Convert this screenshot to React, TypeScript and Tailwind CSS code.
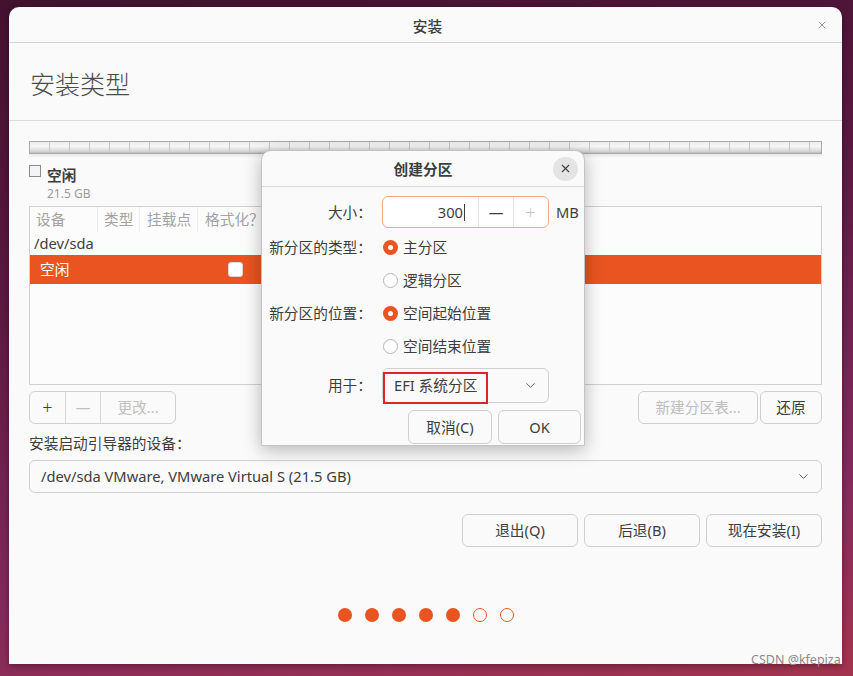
import { ChevronDown, X } from 'lucide-react'

// Ubuntu 安装程序「安装类型」页面 + 「创建分区」对话框

const Btn = ({ label, className = '', disabled = false }: { label: string; className?: string; disabled?: boolean }) => (
  <button
    className={`flex items-center justify-center rounded-[6px] border border-[#cfcfcf] bg-[#fafafa] text-[14.7px] ${
      disabled ? 'text-[#bdbdbd]' : 'text-[#3d3d3d]'
    } ${className}`}
  >
    {label}
  </button>
)

const Radio = ({ checked, label }: { checked: boolean; label: string }) => (
  <div className="flex h-[33px] items-center">
    {checked ? (
      <span className="flex h-[15px] w-[15px] items-center justify-center rounded-full bg-[#e95420]">
        <span className="h-[5px] w-[5px] rounded-full bg-white" />
      </span>
    ) : (
      <span className="h-[15px] w-[15px] rounded-full border border-[#b4b4b4] bg-white" />
    )}
    <span className="ml-[5px]">{label}</span>
  </div>
)

const CreatePartitionDialog = () => (
  <div className="absolute left-[252px] top-[143px] flex h-[296px] w-[324px] flex-col rounded-t-[10px] border border-[#c4c4c4] bg-[#fafafa] shadow-[0_4px_18px_rgba(0,0,0,0.28)]">
    <div className="flex h-[36px] shrink-0 items-center border-b border-[#d8d8d8]">
      <div className="w-[31px]" />
      <div className="flex-1 pt-[2px] text-center text-[14.7px] font-bold text-[#3d3d3d]">创建分区</div>
      <button className="mr-[6px] flex h-[24px] w-[25px] items-center justify-center rounded-full bg-[#e4e4e4]">
        <X size={13} strokeWidth={2} className="text-[#3d3d3d]" />
      </button>
    </div>

    <div className="flex flex-col pl-[7px] text-[14.7px] text-[#3d3d3d]">
      {/* 大小 */}
      <div className="mt-[9px] flex h-[32px] items-center">
        <span className="w-[103px] text-right">大小：</span>
        <div className="ml-[10px] flex h-[32px] w-[167px] items-stretch rounded-[6px] border-[1.5px] border-[#f2a88c] bg-white">
          <div className="flex w-[95px] items-center justify-end pr-[13px]">
            300<span className="ml-[1px] h-[17px] w-px bg-[#3d3d3d]" />
          </div>
          <div className="flex w-[35px] items-center justify-center border-l border-[#e6e6e6] text-[#3d3d3d]">—</div>
          <div className="flex w-[34px] items-center justify-center border-l border-[#e6e6e6] text-[18px] font-light text-[#c4c4c4]">+</div>
        </div>
        <span className="ml-[7px]">MB</span>
      </div>

      {/* 类型 */}
      <div className="mt-[3px] flex">
        <span className="w-[103px] pt-[6px] text-right leading-[20px]">新分区的类型：</span>
        <div className="ml-[11px] flex flex-col">
          <Radio checked label="主分区" />
          <Radio checked={false} label="逻辑分区" />
        </div>
      </div>

      {/* 位置 */}
      <div className="flex">
        <span className="w-[103px] pt-[6px] text-right leading-[20px]">新分区的位置：</span>
        <div className="ml-[11px] flex flex-col">
          <Radio checked label="空间起始位置" />
          <Radio checked={false} label="空间结束位置" />
        </div>
      </div>

      {/* 用于 */}
      <div className="mt-[5px] flex h-[35px] items-center">
        <span className="w-[103px] text-right">用于：</span>
        <div className="relative ml-[10px] flex h-[35px] w-[167px] items-center rounded-[6px] border border-[#d0d0d0] bg-[#fafafa]">
          <span className="pl-[11px]">EFI 系统分区</span>
          <ChevronDown size={15} strokeWidth={1.5} className="ml-auto mr-[10px] text-[#555]" />
          <div className="absolute left-0 top-[3px] h-[32px] w-[105px] border-2 border-[#e0242a]" />
        </div>
      </div>

      {/* 按钮 */}
      <div className="mt-[7px] flex justify-end gap-[6px] pr-[3px]">
        <Btn label="取消(C)" className="h-[34px] w-[84px]" />
        <Btn label="OK" className="h-[34px] w-[83px]" />
      </div>
    </div>
  </div>
)

export default function App() {
  return (
    <div className="relative h-[676px] w-[853px] overflow-hidden bg-[linear-gradient(170deg,#43122f_0%,#5a1840_35%,#832a5c_75%,#a3344f_100%)] pl-[9px] pt-[7px] font-['Noto_Sans','Noto_Sans_CJK_SC',sans-serif]">
      <div className="relative flex h-[657px] w-[833px] flex-col rounded-t-[10px] bg-[#fafafa] shadow-[0_2px_6px_rgba(0,0,0,0.35)]">
        {/* 标题栏 */}
        <div className="flex h-[36px] shrink-0 items-center border-b border-[#d4d4d4]">
          <div className="w-[30px]" />
          <div className="flex-1 pt-[4px] text-center text-[14.7px] font-medium text-[#3d3d3d]">安装</div>
          <X size={12} strokeWidth={1.2} className="mr-[14px] text-[#555]" />
        </div>

        {/* 页面标题 */}
        <div className="flex h-[78px] shrink-0 items-center border-b border-[#dcdcdc] pl-[21px] pt-[6px]">
          <h1 className="text-[25px] font-light text-[#4a4a4a]">安装类型</h1>
        </div>

        <div className="flex flex-col pl-[20px] pr-[20px] pt-[20px] text-[14.7px] text-[#3d3d3d]">
          {/* 分区条 */}
          <div className="flex h-[13px] overflow-hidden border border-[#aaaaaa] bg-[linear-gradient(#ececec,#f6f6f6_40%,#d6d6d6_85%,#b8b8b8)]">
            {Array.from({ length: 40 }).map((_, i) => (
              <div key={i} className="h-full w-[20px] shrink-0 border-r border-[#c6c6c6]" />
            ))}
          </div>
          <div className="h-[4px] bg-[linear-gradient(rgba(0,0,0,0.08),rgba(0,0,0,0))]" />

          {/* 图例 */}
          <div className="mt-[7px] flex">
            <span className="h-[12px] w-[12px] border border-[#8a8a8a] bg-[#f4f4f4]" />
            <div className="ml-[6px] flex flex-col">
              <span className="leading-[20px] font-bold">空闲</span>
              <span className="mt-[2px] text-[12px] leading-[14px] text-[#9a9a9a]">21.5 GB</span>
            </div>
          </div>

          {/* 分区表 */}
          <div className="mt-[5px] flex h-[179px] flex-col border border-[#d0d0d0] bg-[#fcfcfc]">
            <div className="flex h-[25px] shrink-0 items-center text-[#a3a3a3]">
              <span className="flex h-full w-[68px] items-center border-r border-[#ebebeb] pl-[6px]">设备</span>
              <span className="flex h-full w-[42px] items-center border-r border-[#ebebeb] pl-[6px]">类型</span>
              <span className="flex h-full w-[58px] items-center border-r border-[#ebebeb] pl-[7px]">挂载点</span>
              <span className="flex h-full w-[80px] items-center border-r border-[#ebebeb] pl-[7px]">格式化？</span>
              <span className="flex-1" />
            </div>
            <div className="flex h-[23px] shrink-0 items-center pl-[4px]">/dev/sda</div>
            <div className="flex h-[29px] shrink-0 items-center bg-[#e95420] text-white">
              <span className="w-[198px] pl-[10px]">空闲</span>
              <span className="h-[15px] w-[15px] rounded-[3px] border border-[#d8d8d8] bg-white" />
            </div>
          </div>

          {/* 表格按钮 */}
          <div className="mt-[6px] flex h-[33px] items-stretch">
            <div className="flex rounded-[6px] border border-[#d0d0d0] bg-[#fafafa]">
              <span className="flex w-[35px] items-center justify-center text-[18px] font-light">+</span>
              <span className="flex w-[35px] items-center justify-center border-l border-[#d6d6d6] text-[#c0c0c0]">—</span>
              <span className="flex w-[75px] items-center justify-center border-l border-[#d6d6d6] text-[#c0c0c0]">更改...</span>
            </div>
            <div className="ml-auto flex gap-[2px]">
              <Btn label="新建分区表..." disabled className="w-[120px]" />
              <Btn label="还原" className="w-[62px]" />
            </div>
          </div>

          <div className="mt-[9px] leading-[20px]">安装启动引导器的设备：</div>

          <div className="mt-[7px] flex h-[33px] items-center rounded-[6px] border border-[#d0d0d0] bg-[#fafafa] pl-[11px]">
            <span>/dev/sda VMware, VMware Virtual S (21.5 GB)</span>
            <ChevronDown size={15} strokeWidth={1.5} className="ml-auto mr-[10px] text-[#555]" />
          </div>

          {/* 底部按钮 */}
          <div className="mt-[21px] flex justify-end gap-[6px]">
            <Btn label="退出(Q)" className="h-[33px] w-[116px]" />
            <Btn label="后退(B)" className="h-[33px] w-[116px]" />
            <Btn label="现在安装(I)" className="h-[33px] w-[116px]" />
          </div>

          {/* 进度点 */}
          <div className="mt-[61px] flex justify-center gap-[13px]">
            {[0, 1, 2, 3, 4].map((i) => (
              <span key={i} className="h-[14px] w-[14px] rounded-full bg-[#e95420]" />
            ))}
            {[5, 6].map((i) => (
              <span key={i} className="h-[14px] w-[14px] rounded-full border border-[#e95420] bg-white" />
            ))}
          </div>
        </div>

        <CreatePartitionDialog />
      </div>

      <span className="absolute left-[751px] top-[651px] text-[12.5px] text-[#8a8a8a]">CSDN @kfepiza</span>
    </div>
  )
}
